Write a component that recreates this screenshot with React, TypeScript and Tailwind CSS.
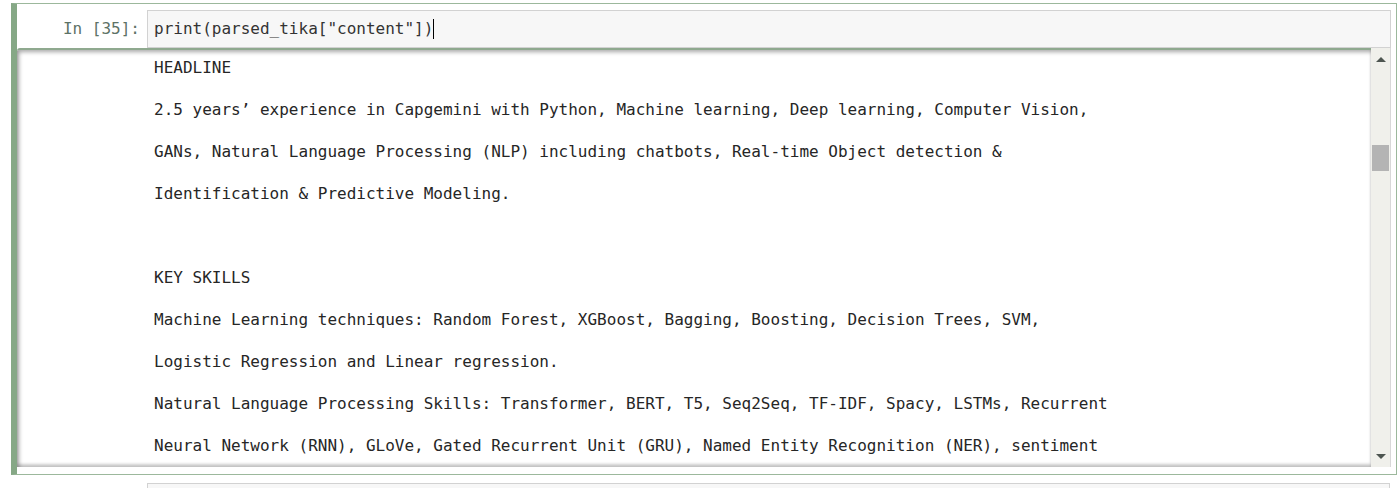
import React from "react";

const lines = [
  "HEADLINE",
  "2.5 years\u2019 experience in Capgemini with Python, Machine learning, Deep learning, Computer Vision,",
  "GANs, Natural Language Processing (NLP) including chatbots, Real-time Object detection &",
  "Identification & Predictive Modeling.",
  "",
  "KEY SKILLS",
  "Machine Learning techniques: Random Forest, XGBoost, Bagging, Boosting, Decision Trees, SVM,",
  "Logistic Regression and Linear regression.",
  "Natural Language Processing Skills: Transformer, BERT, T5, Seq2Seq, TF-IDF, Spacy, LSTMs, Recurrent",
  "Neural Network (RNN), GLoVe, Gated Recurrent Unit (GRU), Named Entity Recognition (NER), sentiment",
];

const mono = "font-['DejaVu_Sans_Mono','Liberation_Mono',monospace]";

export default function App() {
  return (
    <div className="w-[1399px] h-[488px] bg-white overflow-hidden">
      <div className="ml-[11px] mt-[3px] w-[1386px] border border-[#9cb89c] border-l-[6px] border-l-[#86a886] pt-[6px] pr-[5px] pb-[7px]">
        <div className="flex items-stretch">
          <div className={`w-[130px] shrink-0 text-right pr-[7px] text-[16px] leading-[37px] text-[#5d7266] ${mono}`}>
            In&nbsp;[35]:
          </div>
          <div className={`flex-1 h-[38px] border border-[#d2d2d2] bg-[#f7f7f7] pl-[6px] text-[16px] leading-[36px] text-[#333333] ${mono} flex items-center`}>
            <span>print(parsed_tika["content"])</span>
            <span className="inline-block w-px h-[20px] bg-black" />
          </div>
        </div>
        <div className="flex h-[419px]">
          <div className="flex-1 relative overflow-hidden rounded-tl-[3px] border-t-2 border-t-[#8fa98f] shadow-[inset_2px_2px_4px_rgba(0,0,0,0.35),inset_0_-3px_3px_rgba(0,0,0,0.2)]">
            <div className={`pl-[137px] text-[16px] leading-[42px] text-[#262626] whitespace-pre ${mono} -mt-[3px]`}>
              {lines.map((l, i) => (
                <div key={i} className="h-[42px]">{l}</div>
              ))}
            </div>
          </div>
          <div className="w-[20px] shrink-0 bg-[#f0f0eb] border-r border-r-[#d8d8d8] flex flex-col items-center">
            <div className="mt-[9px] w-0 h-0 border-l-[5px] border-r-[5px] border-b-[5px] border-l-transparent border-r-transparent border-b-[#4d5550]" />
            <div className="mt-[83px] w-[17px] h-[26px] bg-[#b4b4b4]" />
            <div className="flex-1" />
            <div className="mb-[8px] w-0 h-0 border-l-[5px] border-r-[5px] border-t-[5px] border-l-transparent border-r-transparent border-t-[#4d5550]" />
          </div>
        </div>
      </div>
      <div className="ml-[147px] mt-[8px] w-[1243px] h-[30px] border border-[#d2d2d2] bg-[#f7f7f7]" />
    </div>
  );
}
